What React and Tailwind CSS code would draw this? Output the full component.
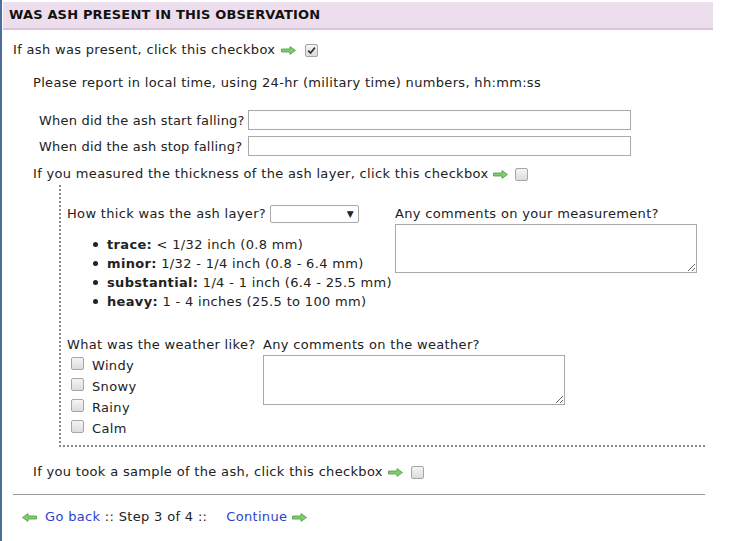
import React from "react";

function Arrow({ left = false }) {
  return (
    <svg width="15" height="9" viewBox="0 0 15 9" className={left ? "inline-block -scale-x-100" : "inline-block"}>
      <polygon points="0.5,3 9,3 9,0.6 14.5,4.5 9,8.4 9,6 0.5,6" fill="#7ccf6a" stroke="#4f9a42" strokeWidth="0.8" />
    </svg>
  );
}

function Box({ checked = false }) {
  return (
    <span className="inline-flex shrink-0 w-[13px] h-[13px] rounded-[2px] border border-[#a6a6a6] bg-gradient-to-b from-[#f4f4f4] to-[#dcdcdc] items-center justify-center">
      {checked && (
        <svg width="9" height="9" viewBox="0 0 9 9">
          <path d="M1.2 4.6 L3.6 7 L7.9 1.6" fill="none" stroke="#333" strokeWidth="1.7" />
        </svg>
      )}
    </span>
  );
}

function Bullet({ b, t }) {
  return (
    <div className="flex items-center h-[19px]">
      <span className="w-[26px] shrink-0" />
      <span className="w-[5px] h-[5px] shrink-0 rounded-full bg-[#222]" />
      <span className="w-[9px] shrink-0" />
      <span className="font-bold">{b}</span>
      <span>&nbsp;{t}</span>
    </div>
  );
}

export default function App() {
  return (
    <div className="flex min-h-[541px] bg-white text-[13px] text-[#222] tracking-[0.33px] whitespace-nowrap" style={{ fontFamily: '"DejaVu Sans", Verdana, sans-serif' }}>
      <div className="w-[2px] shrink-0 bg-[#4d6e9c]" />
      <div className="w-[1px] shrink-0" />
      <div className="w-[710px] shrink-0 flex flex-col">
        <div className="mt-[2px] h-[28px] bg-[#ecdeec] border-b-2 border-[#dcc2dc] flex items-center pl-[6px] font-bold text-[13px] text-[#111] tracking-[0.17px]">
          WAS ASH PRESENT IN THIS OBSERVATION
        </div>
        <div className="pl-[10px] flex flex-col">
          <div className="mt-[9px] h-[22px] flex items-center">
            <span>If ash was present, click this checkbox</span>
            <span className="ml-[6px] flex"><Arrow /></span>
            <span className="ml-[9px] flex"><Box checked /></span>
          </div>
          <div className="mt-[11px] h-[22px] flex items-center pl-[20px]">
            Please report in local time, using 24-hr (military time) numbers, hh:mm:ss
          </div>
          <div className="mt-[16px] h-[20px] flex items-center pl-[26px]">
            <span className="w-[209px] shrink-0 pt-[1px] tracking-[0.2px]">When did the ash start falling?</span>
            <input className="w-[383px] shrink-0 h-[20px] border border-[#a9a9a9] bg-white outline-none" />
          </div>
          <div className="mt-[6px] h-[20px] flex items-center pl-[26px]">
            <span className="w-[209px] shrink-0 pt-[1px] tracking-[0.2px]">When did the ash stop falling?</span>
            <input className="w-[383px] shrink-0 h-[20px] border border-[#a9a9a9] bg-white outline-none" />
          </div>
          <div className="mt-[7px] h-[22px] flex items-center pl-[20px]">
            <span>If you measured the thickness of the ash layer, click this checkbox</span>
            <span className="ml-[5px] flex"><Arrow /></span>
            <span className="ml-[7px] flex"><Box /></span>
          </div>
          <div className="ml-[46px] w-[646px] border-l-2 border-b-2 border-dotted border-[#8a8a8a] pl-[6px] pb-[6px] flex flex-col">
            <div className="mt-[19px] flex">
              <div className="w-[328px] shrink-0 flex flex-col">
                <div className="h-[20px] flex items-center">
                  <span>How thick was the ash layer?</span>
                  <div className="ml-[4px] w-[89px] shrink-0 h-[18px] border border-[#a9a9a9] rounded-[2px] bg-white flex items-center justify-end pr-[4px]">
                    <span className="text-[9px] leading-none">▼</span>
                  </div>
                </div>
                <div className="mt-[11px] flex flex-col">
                  <Bullet b="trace:" t="< 1/32 inch (0.8 mm)" />
                  <Bullet b="minor:" t="1/32 - 1/4 inch (0.8 - 6.4 mm)" />
                  <Bullet b="substantial:" t="1/4 - 1 inch (6.4 - 25.5 mm)" />
                  <Bullet b="heavy:" t="1 - 4 inches (25.5 to 100 mm)" />
                </div>
              </div>
              <div className="flex flex-col">
                <div className="h-[20px] flex items-center">Any comments on your measurement?</div>
                <textarea className="w-[302px] h-[49px] border border-[#a9a9a9] bg-white outline-none" />
              </div>
            </div>
            <div className="mt-[24px] flex">
              <div className="w-[196px] shrink-0 flex flex-col">
                <div className="h-[20px] flex items-center">What was the weather like?</div>
                {["Windy", "Snowy", "Rainy", "Calm"].map((w) => (
                  <div key={w} className="h-[21px] flex items-center pl-[4px]">
                    <span className="flex -mt-[5px]"><Box /></span>
                    <span className="ml-[8px]">{w}</span>
                  </div>
                ))}
              </div>
              <div className="flex flex-col">
                <div className="h-[20px] flex items-center">Any comments on the weather?</div>
                <textarea className="w-[302px] h-[50px] border border-[#a9a9a9] bg-white outline-none" />
              </div>
            </div>
          </div>
          <div className="mt-[14px] h-[22px] flex items-center pl-[20px]">
            <span>If you took a sample of the ash, click this checkbox</span>
            <span className="ml-[5px] flex"><Arrow /></span>
            <span className="ml-[8px] flex"><Box /></span>
          </div>
          <div className="mt-[11px] w-[692px] h-[1px] bg-[#9a9a9a]" />
          <div className="mt-[11px] h-[22px] flex items-center pl-[9px]">
            <Arrow left />
            <span className="ml-[8px] text-[#2b43c8]">Go back</span>
            <span>&nbsp;:: Step 3 of 4 ::&nbsp;&nbsp;</span>
            <span className="ml-[10px] text-[#2b43c8]">Continue</span>
            <span className="ml-[5px] flex"><Arrow /></span>
          </div>
        </div>
      </div>
    </div>
  );
}
